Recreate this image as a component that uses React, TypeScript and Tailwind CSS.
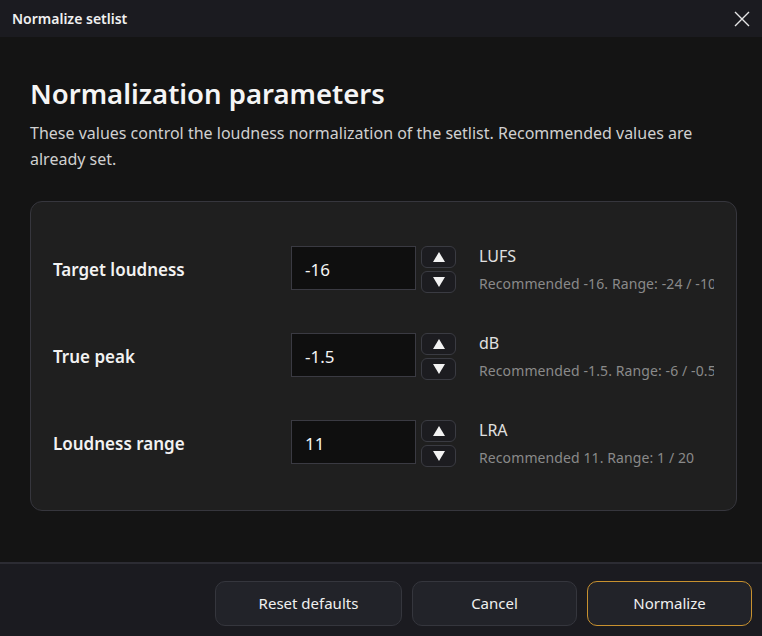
import React from "react";

const rows = [
  { label: "Target loudness", value: "-16", unit: "LUFS", rec: "Recommended -16. Range: -24 / -10" },
  { label: "True peak", value: "-1.5", unit: "dB", rec: "Recommended -1.5. Range: -6 / -0.5" },
  { label: "Loudness range", value: "11", unit: "LRA", rec: "Recommended 11. Range: 1 / 20" },
];

function Spin({ up }: { up: boolean }) {
  return (
    <div className="w-[35px] h-[22px] rounded-[6px] border border-[#3a3b42] bg-[#1c1c20] flex items-center justify-center">
      <svg width="12" height="10" viewBox="0 0 12 10">
        {up ? <polygon points="6,0 12,10 0,10" fill="#f2f2f2" /> : <polygon points="0,0 12,0 6,10" fill="#f2f2f2" />}
      </svg>
    </div>
  );
}

export default function App() {
  return (
    <div
      className="w-[762px] h-[636px] flex flex-col bg-[#141414] text-white overflow-hidden"
      style={{ fontFamily: '"Noto Sans", "Open Sans", sans-serif' }}
    >
      <div className="h-[37px] bg-[#1b1b20] flex items-center justify-between pl-[12px] pr-[12px] shrink-0">
        <span className="text-[14px] font-semibold text-[#f0f0f0]">Normalize setlist</span>
        <svg width="16" height="16" viewBox="0 0 16 16">
          <path d="M1 1 L15 15 M15 1 L1 15" stroke="#e6e6e6" strokeWidth="1.4" />
        </svg>
      </div>
      <div className="flex-1 pl-[30px] pr-[25px] pt-[39px]">
        <h1 className="text-[27.5px] font-semibold leading-[36px] text-[#f5f5f5]">Normalization parameters</h1>
        <p className="mt-[8px] text-[16px] leading-[26px] text-[#d0d0d0] pr-[25px]">
          These values control the loudness normalization of the setlist. Recommended values are already set.
        </p>
        <div className="mt-[29px] h-[310px] rounded-[12px] border border-[#36363d] bg-[#1f1f1f] px-[22px] py-[44px] flex flex-col gap-[43px] overflow-hidden">
          {rows.map((r) => (
            <div key={r.label} className="flex items-center h-[44px] shrink-0">
              <div className="w-[238px] shrink-0 pt-[3px] text-[17px] font-semibold text-[#f2f2f2]">{r.label}</div>
              <div className="w-[125px] h-[44px] shrink-0 bg-[#0f0f0f] border border-[#3a3a42] flex items-center pl-[13px] pt-[3px] text-[17px] text-[#f5f5f5]">
                {r.value}
              </div>
              <div className="ml-[5px] self-start flex flex-col gap-[3px] shrink-0">
                <Spin up />
                <Spin up={false} />
              </div>
              <div className="ml-[23px] self-start -mt-[1px] flex flex-col gap-[7px] whitespace-nowrap overflow-hidden min-w-0">
                <span className="text-[16px] leading-[22px] text-[#e0e0e0]">{r.unit}</span>
                <span className="text-[14px] leading-[20px] tracking-[0.1px] text-[#8a8a8a]">{r.rec}</span>
              </div>
            </div>
          ))}
        </div>
      </div>
      <div className="h-[74px] shrink-0 border-t-2 border-[#2c2c33] bg-[#1b1b20] flex items-start justify-end gap-[10px] pr-[10px] pt-[17px]">
        <button className="w-[187px] h-[45px] rounded-[10px] border border-[#35363d] bg-[#222329] text-[15px] text-[#f0f0f0]">Reset defaults</button>
        <button className="w-[165px] h-[45px] rounded-[10px] border border-[#35363d] bg-[#222329] text-[15px] text-[#f0f0f0]">Cancel</button>
        <button className="w-[165px] h-[45px] rounded-[10px] border border-[#c8912f] bg-[#222329] text-[15px] text-[#f0f0f0]">Normalize</button>
      </div>
    </div>
  );
}
